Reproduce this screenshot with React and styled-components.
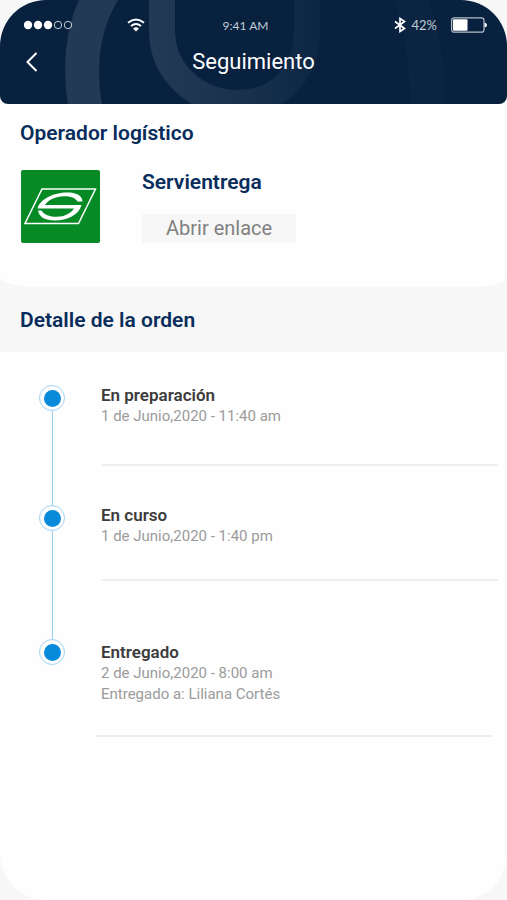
import React from 'react';
import styled, { createGlobalStyle } from 'styled-components';

const GlobalStyle = createGlobalStyle`
  * {
    box-sizing: border-box;
  }

  body {
    margin: 0;
    background-color: #f7f7f7;
    font-family: Roboto, "Liberation Sans", sans-serif;
  }

  h1, h2, h3, p, ol {
    margin: 0;
    padding: 0;
  }
`;

const Screen = styled.div`
  display: flex;
  flex-direction: column;
  min-height: 100vh;
  background-color: #fefefe;
  border-radius: 46px;
  overflow: hidden;
`;

const Header = styled.header`
  position: relative;
  padding: 15px 20px 28px 24px;
  background-color: #08213f;
  border-radius: 0 0 8px 8px;
  color: #fff;
  overflow: hidden;
`;

const HeaderPattern = styled.svg`
  position: absolute;
  top: 0;
  left: 0;
`;

const StatusBar = styled.div`
  position: relative;
  display: grid;
  grid-template-columns: 1fr auto 1fr;
  align-items: center;
  height: 20px;
  font-family: Lato, sans-serif;
  font-size: 13px;
  color: #c3ccd6;
`;

const StatusGroup = styled.div`
  display: flex;
  align-items: center;
  justify-content: ${({ $end }) => ($end ? 'flex-end' : 'flex-start')};
  gap: ${({ $gap }) => $gap}px;
`;

const Time = styled.span`
  font-size: 12px;
  padding-right: 20px;
`;

const Percent = styled.span`
  padding-right: 8px;
`;

const TitleBar = styled.div`
  position: relative;
  display: grid;
  grid-template-columns: 24px 1fr 24px;
  align-items: center;
  height: 28px;
  margin-top: 13px;
  padding-right: 4px;
`;

const BackButton = styled.button`
  display: flex;
  padding: 0;
  border: none;
  background: none;
  color: #fff;
  cursor: pointer;
`;

const Title = styled.h1`
  font-size: 22px;
  line-height: 28px;
  font-weight: 400;
  text-align: center;
`;

const Main = styled.main`
  flex: 1;
`;

const OperatorBackdrop = styled.div`
  background-color: #f7f7f7;
`;

const OperatorSection = styled.section`
  padding: 16px 20px 43px;
  background-color: #fefefe;
  border-radius: 0 0 36px 36px / 0 0 10px 10px;
`;

const SectionTitle = styled.h2`
  font-size: 21px;
  line-height: 26px;
  font-weight: 600;
  color: #082d5c;
`;

const Operator = styled.div`
  display: flex;
  gap: 41px;
  margin-top: 23px;
`;

const OperatorInfo = styled.div`
  display: flex;
  flex-direction: column;
  align-items: flex-start;
  gap: 19px;
`;

const OperatorName = styled.h3`
  font-size: 21px;
  line-height: 26px;
  font-weight: 600;
  color: #082d5c;
`;

const OperatorLink = styled.a`
  padding: 0 24px;
  background-color: #f7f7f7;
  font-size: 20px;
  line-height: 29px;
  color: #808080;
  text-decoration: none;
`;

const DetailHeader = styled.div`
  padding: 20px 20px 19px;
  background-color: #f7f7f7;
`;

const Timeline = styled.ol`
  list-style: none;
  padding: 33px 9px 0 39px;
`;

const Step = styled.li`
  display: flex;
  gap: 36px;
`;

const Track = styled.div`
  display: flex;
  flex-direction: column;
  align-items: center;
  width: 26px;
`;

const Dot = styled.span`
  display: flex;
  align-items: center;
  justify-content: center;
  width: 26px;
  height: 26px;
  flex-shrink: 0;
  border: 1px solid #a3d3f0;
  border-radius: 50%;

  &:after {
    content: '';
    width: 17px;
    height: 17px;
    border-radius: 50%;
    background-color: #078ad9;
  }
`;

const Connector = styled.span`
  flex: 1;
  width: 1px;
  background-color: #94cef0;
`;

const StepBody = styled.div`
  flex: 1;
  padding-top: ${({ $before }) => $before}px;
  padding-bottom: ${({ $after }) => $after}px;
`;

const StepTitle = styled.h3`
  margin-bottom: 1px;
  font-size: 17px;
  line-height: 20px;
  font-weight: 600;
  color: #3c3c3c;
`;

const StepText = styled.p`
  font-size: 15px;
  line-height: 21px;
  color: #9b9b9b;
`;

const Divider = styled.hr`
  height: 2px;
  margin: ${({ $space }) => $space}px 0 0;
  border: none;
  background-color: #efefef;
`;

const EndDivider = styled(Divider)`
  margin: 0 15px 0 96px;
`;

const steps = [
  { title: 'En preparación', lines: ['1 de Junio,2020 - 11:40 am'], before: 0, space: 37, after: 39 },
  { title: 'En curso', lines: ['1 de Junio,2020 - 1:40 pm'], before: 0, space: 32, after: 58 },
  {
    title: 'Entregado',
    lines: ['2 de Junio,2020 - 8:00 am', 'Entregado a: Liliana Cortés'],
    before: 3,
    after: 30,
  },
];

const Signal = () => (
  <svg width="49" height="10" viewBox="0 0 49 10" aria-hidden="true">
    {[4, 14, 24].map((x) => (
      <circle key={x} cx={x} cy="5" r="4.2" fill="#fff" />
    ))}
    {[34, 44].map((x) => (
      <circle key={x} cx={x} cy="5" r="3.7" fill="none" stroke="#c3ccd6" />
    ))}
  </svg>
);

const Wifi = () => (
  <svg width="18" height="14" viewBox="0 0 18 14" fill="none" stroke="#fff" strokeWidth="2" aria-hidden="true">
    <path d="M1 4.8Q9-1.8 17 4.8" />
    <path d="M4 8Q9 4 14 8" />
    <path d="M9 13.5L6 10.4Q9 8.2 12 10.4Z" fill="#fff" stroke="none" />
  </svg>
);

const Bluetooth = () => (
  <svg width="12" height="16" viewBox="0 0 12 16" fill="none" stroke="#fff" strokeWidth="1.7" aria-hidden="true">
    <path d="M1 4.5L10.5 11.5L6 14.5V1.5L10.5 4.5L1 11.5" />
  </svg>
);

const Battery = () => (
  <svg width="36" height="16" viewBox="0 0 36 16" aria-hidden="true">
    <rect x="0.6" y="0.8" width="32.4" height="14.4" rx="2.5" fill="none" stroke="#b5bfcb" strokeWidth="1.2" />
    <rect x="2" y="2.2" width="14.5" height="11.6" rx="1" fill="#fff" />
    <path d="M33.6 5.5Q36 6 36 8T33.6 10.5Z" fill="#fff" />
  </svg>
);

const BackIcon = () => (
  <svg width="16" height="20" viewBox="0 0 16 20" fill="none" stroke="currentColor" strokeWidth="2" aria-hidden="true">
    <path d="M12.5 1L3.5 10L12.5 19" />
  </svg>
);

const Pattern = () => (
  <HeaderPattern width="507" height="104" viewBox="0 0 507 104" fill="none" aria-hidden="true">
    <defs>
      <linearGradient id="band" gradientUnits="userSpaceOnUse" x1="150" y1="0" x2="320" y2="0">
        <stop offset="0" stopColor="#233a55" />
        <stop offset="0.5" stopColor="#1a324e" />
        <stop offset="1" stopColor="#0c2643" />
      </linearGradient>
    </defs>
    <path d="M79 0C66 28 62 66 68 104H102C96 66 99 32 118 0Z" fill="#233a55" />
    <path d="M162 -5V30C162 72 196 103 238 103S307 72 307 30V-5" stroke="url(#band)" strokeWidth="26" />
    <path d="M395 0C405 34 410 68 410 104H445C445 66 440 32 429 0Z" fill="#0b2441" />
  </HeaderPattern>
);

const ServientregaLogo = () => (
  <svg width="81" height="75" viewBox="0 0 81 75" role="img" aria-label="Servientrega">
    <rect x="1" y="1" width="79" height="73" rx="2" fill="#058a26" />
    <path d="M22 20H75.5L58.5 54.5H5Z" fill="none" stroke="#fff" strokeWidth="1.5" />
    <path
      d="M62.5 32.5C62 26 56 23.5 47 23.5C34 23.5 20 30 17.5 39.5H54C51 44 45 47.8 37 47.8C29 47.8 24 45.5 21.5 41.5H18C19 48 25 51.5 35 51.5C47 51.5 59 46 61.500 36H25C28 31 36 27.3 44 27.3C51 27.3 55.5 29 57.5 32.5Z"
      fill="#fff"
    />
  </svg>
);

const App = () => {
  return (
    <>
      <GlobalStyle />
      <Screen>
        <Header>
          <Pattern />
          <StatusBar>
            <StatusGroup $gap={54}>
              <Signal />
              <Wifi />
            </StatusGroup>
            <Time>9:41 AM</Time>
            <StatusGroup $end $gap={6}>
              <Bluetooth />
              <Percent>42%</Percent>
              <Battery />
            </StatusGroup>
          </StatusBar>
          <TitleBar>
            <BackButton type="button" aria-label="Volver">
              <BackIcon />
            </BackButton>
            <Title>Seguimiento</Title>
          </TitleBar>
        </Header>

        <Main>
          <OperatorBackdrop>
            <OperatorSection>
              <SectionTitle>Operador logístico</SectionTitle>
              <Operator>
                <ServientregaLogo />
                <OperatorInfo>
                  <OperatorName>Servientrega</OperatorName>
                  <OperatorLink href="#enlace">Abrir enlace</OperatorLink>
                </OperatorInfo>
              </Operator>
            </OperatorSection>
          </OperatorBackdrop>

          <DetailHeader>
            <SectionTitle>Detalle de la orden</SectionTitle>
          </DetailHeader>

          <Timeline>
            {steps.map((step, index) => {
              const isLast = index === steps.length - 1;
              return (
                <Step key={step.title}>
                  <Track>
                    <Dot />
                    {!isLast && <Connector />}
                  </Track>
                  <StepBody $before={step.before} $after={step.after}>
                    <StepTitle>{step.title}</StepTitle>
                    {step.lines.map((line) => (
                      <StepText key={line}>{line}</StepText>
                    ))}
                    {!isLast && <Divider $space={step.space} />}
                  </StepBody>
                </Step>
              );
            })}
          </Timeline>
          <EndDivider />
        </Main>
      </Screen>
    </>
  );
};

export default App;
